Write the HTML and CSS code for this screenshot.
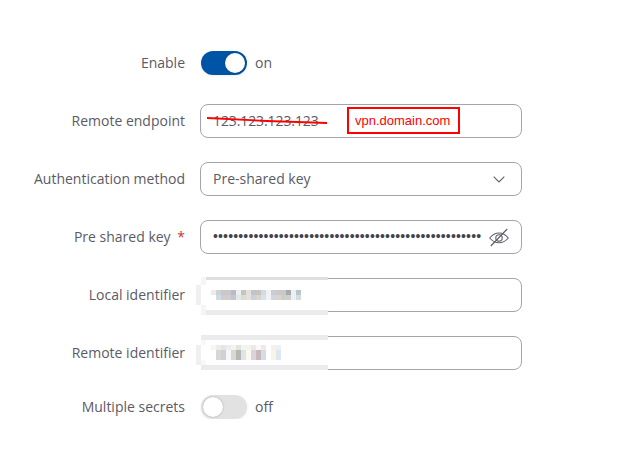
FILE: index.html
```html
<!DOCTYPE html>
<html lang="en">

<head>
    <meta charset="UTF-8">
    <meta name="viewport" content="width=device-width, initial-scale=1.0">
    <title>IPsec instance</title>
    <link rel="stylesheet" href="styles.css">
</head>

<body>
    <form class="settings-form">
        <div class="form-row toggle-row first-row">
            <label class="form-label">Enable</label>
            <div class="toggle toggle-on"><span class="toggle-knob"></span></div>
            <span class="toggle-text">on</span>
        </div>

        <div class="form-row">
            <label class="form-label">Remote endpoint</label>
            <div class="form-input">
                <span class="old-value">123.123.123.123</span>
                <svg class="strike" width="122" height="12" viewBox="0 0 122 12">
                    <path d="M0 3L60 6L120 8" fill="none" stroke="#ff0000" stroke-width="1.8"/>
                </svg>
                <span class="new-value">vpn.domain.com</span>
            </div>
        </div>

        <div class="form-row">
            <label class="form-label">Authentication method</label>
            <div class="form-input select-input">
                <span>Pre-shared key</span>
                <svg class="chevron" width="12" height="7" viewBox="0 0 12 7">
                    <path d="M.7.7L6 6l5.300-5.300" fill="none" stroke="#5f5f68" stroke-width="1.1"/>
                </svg>
            </div>
        </div>

        <div class="form-row">
            <label class="form-label">Pre shared key <span class="required">*</span></label>
            <div class="form-input select-input">
                <span class="dots">•••••••••••••••••••••••••••••••••••••••••••••••••••••</span>
                <svg width="20" height="19" viewBox="0 0 20 19">
                    <path d="M.7 10C3.500 6.500 6.800 5 10 5s6.500 1.500 9.300 5c-2.800 3.300-6.100 4.800-9.300 4.800S3.500 13.300.7 10z" fill="none" stroke="#5f5f68" stroke-width="1.1"/>
                    <circle cx="10" cy="9.900" r="3.200" fill="none" stroke="#5f5f68" stroke-width="1.1"/>
                    <path d="M1.800 18L18.200 1" fill="none" stroke="#5f5f68" stroke-width="1.2"/>
                </svg>
            </div>
        </div>

        <div class="form-row">
            <label class="form-label">Local identifier</label>
            <div class="form-input">
                <div class="mosaic mosaic-local">
                    <div class="mosaic-text">
                        <div class="mosaic-row local-row-1"></div>
                        <div class="mosaic-row local-row-2"></div>
                    </div>
                </div>
            </div>
        </div>

        <div class="form-row">
            <label class="form-label">Remote identifier</label>
            <div class="form-input">
                <div class="mosaic mosaic-remote">
                    <div class="mosaic-text">
                        <div class="mosaic-row remote-row-1"></div>
                        <div class="mosaic-row remote-row-2"></div>
                    </div>
                </div>
            </div>
        </div>

        <div class="form-row toggle-row">
            <label class="form-label">Multiple secrets</label>
            <div class="toggle"><span class="toggle-knob"></span></div>
            <span class="toggle-text">off</span>
        </div>
    </form>
</body>
</html>
```

FILE: styles.css
```css
body {
    font-family: "Open Sans", Arial, sans-serif;
    font-size: 14px;
    color: #5b5b66;
    background-color: white;
    margin: 0;
}

.settings-form {
    display: flex;
    flex-direction: column;
    gap: 24px;
    padding-top: 51px;
    width: 522px;
}

.form-row {
    display: flex;
    align-items: center;
    height: 34px;
}

.toggle-row {
    height: 24px;
    margin-top: 1px;
}

.first-row {
    margin-top: 0;
    margin-bottom: 5px;
}

.form-label {
    width: 185px;
    margin-right: 15px;
    margin-bottom: 2px;
    text-align: right;
    flex-shrink: 0;
}

.required {
    color: #c0392b;
    margin-left: 3px;
}

.form-input {
    position: relative;
    display: flex;
    align-items: center;
    flex: 1;
    height: 34px;
    box-sizing: border-box;
    padding: 0 12px;
    border: 1px solid #a5a3ad;
    border-radius: 8px;
    background: white;
}

.form-input span {
    margin-bottom: 2px;
}

.select-input {
    justify-content: space-between;
}

.chevron {
    margin-right: 4px;
}

.dots {
    font-family: "Liberation Sans", Arial, sans-serif;
    font-size: 14px;
    letter-spacing: 0.16px;
    color: #43434d;
}

.old-value {
    width: 134px;
    letter-spacing: -0.1px;
}

.strike {
    position: absolute;
    left: 6px;
    top: 10px;
}

.new-value {
    font-family: "Liberation Sans", Arial, sans-serif;
    font-size: 13px;
    color: #ff0000;
    padding: 3px 8px 3px 6px;
    border: 2px solid #ff0000;
    line-height: 17px;
}

.toggle {
    display: flex;
    align-items: center;
    width: 46px;
    height: 24px;
    margin-left: 1px;
    border-radius: 12px;
    background: #e2e2e2;
    box-sizing: border-box;
    padding: 0 2px;
    box-shadow: 0 1px 3px rgba(0, 0, 0, 0.08);
}

.toggle-on {
    background: #0054a6;
    justify-content: flex-end;
}

.toggle-knob {
    width: 20px;
    height: 20px;
    border-radius: 50%;
    background: white;
    box-shadow: 0 0 2px rgba(0, 0, 0, 0.3);
}

.toggle-text {
    margin-left: 8px;
    margin-bottom: 2px;
}

/* pixelated patches that hide the identifiers */
.mosaic {
    position: absolute;
    left: -5px;
    top: -2px;
    width: 132px;
}

.mosaic-local {
    height: 38px;
    background:
        linear-gradient(#dfdfe3, #dfdfe3) 10px 0 / 122px 3px no-repeat,
        linear-gradient(#ebebed, #ebebed) 10px 33px / 122px 5px no-repeat,
        linear-gradient(#f0f0f2, #f0f0f2) 0 8px / 5px 20px no-repeat,
        linear-gradient(#f5f5f6, #f5f5f6) 5px 0 / 5px 8px no-repeat,
        linear-gradient(#f5f5f6, #f5f5f6) 5px 28px / 5px 10px no-repeat,
        white;
}

.mosaic-remote {
    height: 35px;
    background:
        linear-gradient(#ebebed, #ebebed) 5px 0 / 127px 5px no-repeat,
        linear-gradient(#ebebed, #ebebed) 5px 30px / 127px 5px no-repeat,
        linear-gradient(#f0f0f2, #f0f0f2) 0 10px / 5px 20px no-repeat,
        linear-gradient(#f8f8f8, #f8f8f8) 5px 5px / 5px 5px no-repeat,
        linear-gradient(#f8f8f8, #f8f8f8) 5px 25px / 5px 5px no-repeat,
        white;
}

.mosaic-text {
    position: absolute;
    left: 15px;
}

.mosaic-local .mosaic-text {
    top: 13px;
    width: 90px;
}

.mosaic-remote .mosaic-text {
    top: 10px;
    width: 70px;
}

.mosaic-row {
    height: 5px;
}

.local-row-1 {
    background: linear-gradient(90deg,
        #f0ebe6 0 5px, #c9d3da 5px 10px, #cdc8c8 10px 15px, #c8c8cc 15px 20px, #b9bcc8 20px 25px, #eeeeef 25px 30px,
        #c5c5c0 30px 35px, #e5dfd8 35px 40px, #bdc5ce 40px 45px, #c9c2be 45px 50px, #d2dae3 50px 55px, #f0f2f5 55px 60px,
        #c8ccd4 60px 65px, #cdc8c8 65px 70px, #c9c9c9 70px 75px, #a9a9a9 75px 80px, #e6f0f5 80px 85px, #bcc4c8 85px 90px);
}

.local-row-2 {
    background: linear-gradient(90deg,
        white 0 5px, #d0dce4 5px 10px, #d0ccd0 10px 15px, #d0cdcc 15px 20px, #c4c7d0 20px 25px, #e4e8e8 25px 30px,
        #dcdcd6 30px 35px, #e4e0da 35px 40px, #ccd0d8 40px 45px, #d8d4d0 45px 50px, #dbe0e6 50px 55px, #f0f3f6 55px 60px,
        #d4d4dc 60px 65px, #d8d4d0 65px 70px, #d0ccc8 70px 75px, #d0cec8 75px 80px, #e8f2f6 80px 85px, #d4dcdf 85px 90px);
}

.remote-row-1 {
    background: linear-gradient(90deg,
        #f8f6f4 0 5px, #eeecea 5px 10px, #e8e4e0 10px 15px, #e8eef4 15px 20px, #f4f2f0 20px 25px, #e6e2dc 25px 30px,
        #f0f4f8 30px 35px, #f6f3ea 35px 40px, #ece8e6 40px 45px, #faf8f5 45px 50px, #f0e8f0 50px 55px, white 55px 60px,
        #f8efe6 60px 65px, #e8f0f8 65px 70px);
}

.remote-row-2 {
    height: 10px;
    background: linear-gradient(90deg,
        white 0 5px, #d8d6d8 5px 10px, #d4d0d0 10px 15px, #f4f8fc 15px 20px, #d8d8d0 20px 25px, #b8b8b0 25px 30px,
        #e0e4e8 30px 35px, #fbf8ee 35px 40px, #d8d4dc 40px 45px, #c8b8bc 45px 50px, #d4dde0 50px 55px, white 55px 60px,
        #faf4e8 60px 65px, #dce8f4 65px 70px);
}
```
